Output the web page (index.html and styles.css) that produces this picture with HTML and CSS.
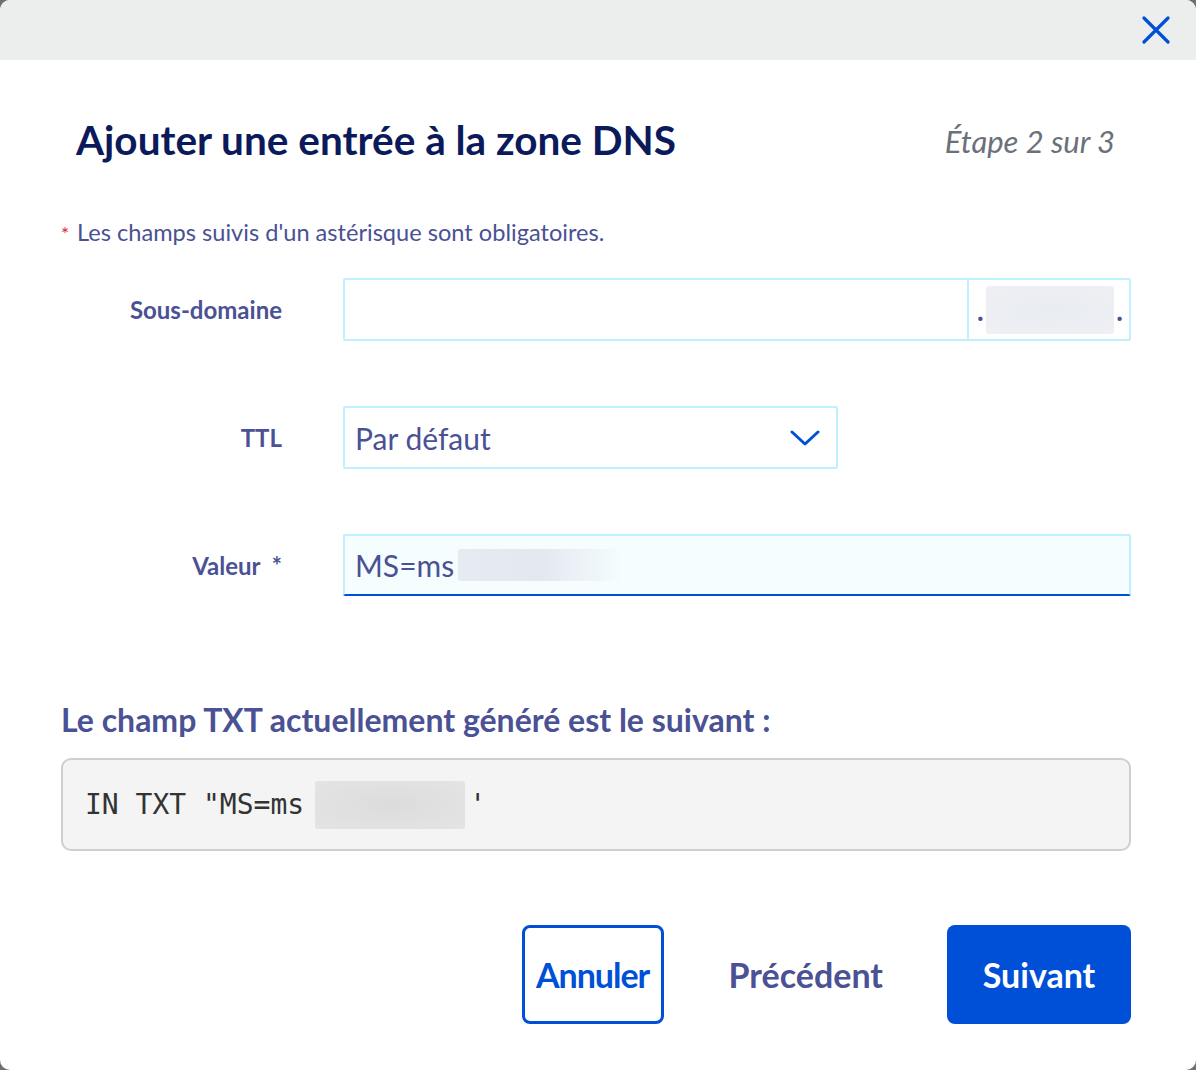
FILE: index.html
```html
<!DOCTYPE html>
<html lang="fr">
<head>
<meta charset="utf-8">
<title>Ajouter une entrée à la zone DNS</title>
<link rel="stylesheet" href="styles.css">
</head>
<body>
<div class="modal">
  <div class="modal-top">
    <button class="close" aria-label="Fermer">
      <svg width="28" height="28" viewBox="0 0 28 28"><path d="M2 2 L26 26 M26 2 L2 26" stroke="#0050d7" stroke-width="3.2" stroke-linecap="round" fill="none"/></svg>
    </button>
  </div>
  <div class="modal-body">
    <div class="title-row">
      <h1 class="title">Ajouter une entrée à la zone DNS</h1>
      <span class="step">Étape 2 sur 3</span>
    </div>
    <p class="note"><span class="req">*</span>Les champs suivis d'un astérisque sont obligatoires.</p>
    <div class="form">
      <label class="label">Sous-domaine</label>
      <div class="field group">
        <div class="grow"></div>
        <div class="suffix"><span>.</span><span class="blur blur-suffix"></span><span>.</span></div>
      </div>
      <label class="label">TTL</label>
      <div class="field select">
        <span>Par défaut</span>
        <svg width="30" height="18" viewBox="0 0 30 18"><path d="M2 3 L15 15 L28 3" stroke="#0050d7" stroke-width="3" fill="none" stroke-linecap="round" stroke-linejoin="round"/></svg>
      </div>
      <label class="label">Valeur <span class="star">*</span></label>
      <div class="field value"><span>MS=ms</span><span class="blur blur-value"></span></div>
    </div>
    <h2 class="subhead">Le champ TXT actuellement généré est le suivant :</h2>
    <div class="code"><span>IN TXT "MS=ms</span><span class="blur blur-code"></span><span>'</span></div>
    <div class="actions">
      <button class="btn btn-outline">Annuler</button>
      <button class="btn btn-link">Précédent</button>
      <button class="btn btn-primary">Suivant</button>
    </div>
  </div>
</div>
</body>
</html>
```
FILE: styles.css
```css
* { box-sizing: border-box; }
html, body { margin: 0; padding: 0; }
body {
  background: #6e6e73;
  font-family: Lato, "Noto Sans", sans-serif;
  width: 1196px;
  height: 1070px;
  overflow: hidden;
}
.modal {
  width: 1196px;
  height: 1070px;
  background: #fff;
  border-radius: 10px;
  overflow: hidden;
}
.modal-top {
  height: 60px;
  background: #eceeed;
  display: flex;
  justify-content: flex-end;
  align-items: center;
  padding-right: 26px;
}
.close {
  background: none;
  border: 0;
  padding: 0;
  width: 28px;
  height: 28px;
  display: flex;
}
.modal-body {
  padding: 0 65px 0 61px;
}
.title-row {
  display: flex;
  justify-content: space-between;
  align-items: baseline;
  padding: 56px 16px 0 15px;
}
.title {
  margin: 0;
  font-size: 40.5px;
  font-weight: 700;
  color: #0b1a5a;
  line-height: 48px;
}
.step {
  font-style: italic;
  font-size: 31px;
  color: #6b7079;
  position: relative;
  top: -2px;
}
.note {
  margin: 54px 0 0 0;
  font-size: 23.6px;
  color: #4a5194;
  line-height: 28px;
}
.req {
  color: #e0212f;
  margin-right: 8px;
  font-size: 19px;
}
.form {
  display: grid;
  grid-template-columns: 221px 1fr;
  column-gap: 61px;
  row-gap: 65px;
  margin-top: 30px;
  align-items: center;
}
.label {
  text-align: right;
  font-weight: 700;
  font-size: 24px;
  color: #4a5194;
}
.star { margin-left: 6px; }
.field {
  height: 63px;
  border: 2px solid #bef1fd;
  border-radius: 2px;
  display: flex;
  align-items: center;
  font-size: 30px;
  color: #4a5194;
}
.group .grow { flex: 1; height: 100%; }
.suffix {
  width: 162px;
  height: 100%;
  border-left: 2px solid #bef1fd;
  display: flex;
  align-items: center;
  padding: 0 6px 0 8px;
  font-size: 28px;
  font-weight: 700;
}
.blur { display: inline-block; border-radius: 3px; }
.blur-suffix {
  flex: 1;
  height: 48px;
  background: radial-gradient(ellipse at center, #e9ecf1 0%, #eef0f4 100%);
  margin: 0 2px 0 2px;
}
.select {
  width: 495px;
  justify-content: space-between;
  padding: 0 16px 0 10px;
}
.value {
  background: #f5fdff;
  border-bottom: 2px solid #0050d7;
  padding-left: 10px;
  height: 62px;
}
.blur-value {
  width: 165px;
  height: 32px;
  background: linear-gradient(90deg, #e6eaf1 0%, #e3e8ef 50%, rgba(230,234,241,0) 100%);
  margin-left: 4px;
}
.subhead {
  margin: 106px 0 0 0;
  font-size: 32px;
  font-weight: 700;
  color: #4a5194;
  line-height: 36px;
}
.code {
  margin-top: 20px;
  height: 93px;
  background: #f4f4f4;
  border: 2px solid #cfcfcf;
  border-radius: 10px;
  display: flex;
  align-items: center;
  padding-left: 22px;
  font-family: "DejaVu Sans Mono", monospace;
  font-size: 28px;
  color: #333;
}
.blur-code {
  width: 150px;
  height: 48px;
  background: radial-gradient(ellipse at center, #dcdcdc 0%, #e4e4e4 100%);
  margin: 0 4px 0 11px;
}
.actions {
  display: flex;
  justify-content: flex-end;
  align-items: center;
  margin-top: 74px;
}
.btn {
  font-family: Lato, "Noto Sans", sans-serif;
  font-weight: 700;
  font-size: 34px;
  height: 99px;
  border-radius: 8px;
  cursor: pointer;
}
.btn-outline {
  width: 142px;
  background: #fff;
  color: #0050d7;
  border: 3px solid #0050d7;
  padding: 0;
  letter-spacing: -1px;
}
.btn-link {
  background: none;
  border: 0;
  color: #4a5194;
  padding: 0 64px 0 65px;
}
.btn-primary {
  width: 184px;
  background: #0050d7;
  border: 0;
  color: #fff;
}
```
